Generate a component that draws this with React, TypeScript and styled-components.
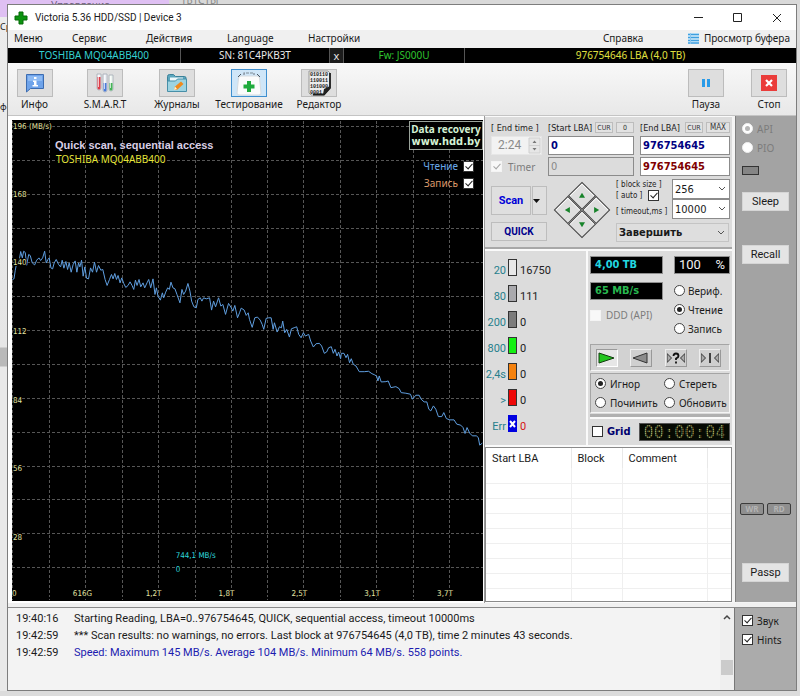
import React from 'react';
import styled, { createGlobalStyle, css } from 'styled-components';

const UI = '"Noto Sans", "Open Sans", sans-serif';
const NARROW = 'Roboto, "Noto Sans", sans-serif';
const WIDE = '"DejaVu Sans Condensed", "DejaVu Sans", "Noto Sans", sans-serif';

const GlobalStyle = createGlobalStyle`
  * { box-sizing: border-box; }
  body { margin: 0; background: #e2e2e2; color: #1a1a1a; font: 10px/14px ${UI}; }
  button, input, select { font: inherit; color: inherit; margin: 0; padding: 0; border-radius: 0; }
  svg { display: block; }
`;

/* ---------- desktop behind the window ---------- */

const Desktop = styled.div`
  display: grid;
  grid-template-columns: 7px minmax(0, 1fr) 3px;
  grid-template-rows: 4px auto 5px;
  min-height: 100vh;
  background: #dcdcdc;
`;

const TabStrip = styled.div`
  grid-column: 1 / -1;
  display: grid;
  grid-template-columns: 51px 118px 12px 1fr;
  overflow: hidden;
  background: linear-gradient(90deg, #dfc0f3 169px, #d9d9d9 169px);
  line-height: 10px;
  color: #6f6180;
`;

const TabTail = styled.span`
  grid-column: 4;
  margin-top: -5px;
  color: #8a8a8a;
`;

const LeftStrip = styled.div`
  display: flex;
  flex-direction: column;
  gap: 66px;
  overflow: hidden;
  padding-top: 16px;
  background: linear-gradient(#dfc0f3 13px, #ececec 13px, #e6e6e6 343px, #b9b9b9 344px, #b9b9b9 362px, #e9e9e9 363px);
  font-size: 9px;
`;

const Window = styled.main`
  display: flex;
  flex-direction: column;
  border: 1px solid #7d7d7d;
  background: #f0f0f0;
`;

/* ---------- title, menu, identity bar ---------- */

const TitleBar = styled.header`
  display: flex;
  align-items: center;
  height: 25px;
  padding: 0 13px 0 6px;
  background: #fff;
`;

const Title = styled.h1`
  flex: 1;
  margin: 0 0 0 7px;
  font: 10px/14px ${NARROW};
`;

const CaptionButton = styled.button`
  display: grid;
  place-items: center;
  width: 39px;
  height: 22px;
  border: 0;
  background: none;
  &:last-child { width: 12px; margin-left: 14px; }
`;

const MenuBar = styled.nav`
  display: grid;
  grid-template-columns: 58px 74px 81px 81px minmax(0, 1fr) 85px auto;
  align-items: center;
  height: 18px;
  padding: 0 6px 2px;
`;

const MenuItem = styled.button`
  display: flex;
  align-items: center;
  gap: 5px;
  border: 0;
  background: none;
  text-align: left;
  white-space: nowrap;
`;

const Identity = styled.div`
  display: grid;
  grid-template-columns: 172px 148px 13px 120px minmax(0, 1fr);
  gap: 1px;
  height: 15px;
  background: #555;
`;

const IdentityCell = styled.span<{ $color: string; $dim?: boolean }>`
  background: ${p => (p.$dim ? '#1c1c1c' : '#000')};
  color: ${p => p.$color};
  font-size: ${p => (p.$dim ? '11px' : '10px')};
  line-height: 15px;
  text-align: center;
  white-space: nowrap;
`;

/* ---------- toolbar ---------- */

const Toolbar = styled.div`
  display: grid;
  grid-template-columns: 53px 88px 56px 88px 52px minmax(0, 1fr) 56px 8px 54px;
  height: 53px;
  padding-top: 6px;
  border-bottom: 1px solid #c4c4c4;
  background: linear-gradient(#f8f8f8, #e8e8e8);
`;

const ToolSlot = styled.label<{ $col: number }>`
  grid-column: ${p => p.$col};
  display: flex;
  flex-direction: column;
  align-items: center;
  white-space: nowrap;
`;

const ToolButton = styled.button<{ $active?: boolean }>`
  display: grid;
  place-items: center;
  width: 36px;
  height: 28px;
  border: 1px solid ${p => (p.$active ? '#3f8fcf' : '#bcbcbc')};
  background: ${p => (p.$active ? '#cfe6f8' : '#dedede')};
`;

/* ---------- work area ---------- */

const WorkArea = styled.div`
  display: grid;
  grid-template-columns: minmax(0, 1fr) 248px 3px 61px;
  background: #f4f4f4;
`;

const ChartPane = styled.section`
  padding: 4px 1px 2px 4px;
  background: #fff;
`;

const ChartBox = styled.div`
  position: relative;
  height: 481px;
  overflow: hidden;
  background: #000;
`;

const ChartSvg = styled.svg`
  width: 100%;
  height: 100%;
`;

const Banner = styled.a`
  position: absolute;
  top: 1px;
  right: 0;
  width: 74px;
  height: 29px;
  border: 1px solid #9aa39a;
  background: #000;
  color: #d3f0d3;
  font: bold 10px/14px ${UI};
  text-align: center;
  text-decoration: none;
  white-space: nowrap;
`;

const BannerUrl = styled.span`
  display: block;
  font: bold 11px/12px ${WIDE};
`;

const Legend = styled.div`
  position: absolute;
  top: 39px;
  right: 9px;
  display: grid;
  gap: 3px;
`;

const LegendRow = styled.label<{ $color: string }>`
  display: flex;
  align-items: center;
  justify-content: flex-end;
  gap: 5px;
  color: ${p => p.$color};
`;

/* ---------- form controls ---------- */

const CheckInput = styled.input.attrs({ type: 'checkbox' })`
  appearance: none;
  display: grid;
  place-items: center;
  flex: none;
  width: 11px;
  height: 11px;
  border: 1px solid #333;
  background: #fff;
  &:disabled { border-color: #f4f4f4; background: #f8f8f8; }
  &:checked::after {
    content: '';
    width: 3px;
    height: 6px;
    margin-top: -2px;
    border: solid #222;
    border-width: 0 1px 1px 0;
    transform: rotate(42deg);
  }
  &:checked:disabled::after { border-color: #a5a5a5; }
`;

const RadioInput = styled.input.attrs({ type: 'radio' })`
  appearance: none;
  display: grid;
  place-items: center;
  flex: none;
  width: 11px;
  height: 11px;
  border: 1px solid #444;
  border-radius: 50%;
  background: #fff;
  &:checked::after {
    content: '';
    width: 5px;
    height: 5px;
    border-radius: 50%;
    background: #222;
  }
  &:disabled { border-color: #f0f0f0; }
  &:disabled:checked::after { background: #b5b5b5; }
`;

const Option = styled.label<{ $muted?: boolean; $gap?: number; $short?: boolean }>`
  display: flex;
  align-items: center;
  gap: ${p => p.$gap ?? 3}px;
  height: ${p => (p.$short ? 14 : 19)}px;
  color: ${p => (p.$muted ? '#7c7c7c' : 'inherit')};
  white-space: nowrap;
`;

const Field = styled.input<{ $tone?: string; $muted?: boolean }>`
  width: 100%;
  min-width: 0;
  height: 19px;
  padding: 0 2px;
  border: 1px solid #8b8b8b;
  background: ${p => (p.$muted ? '#dcdcdc' : '#fff')};
  color: ${p => p.$tone ?? '#888'};
  font: ${p => (p.$muted ? 'normal' : 'bold')} 11px/16px ${WIDE};
`;

const SmallLabel = styled.label`
  color: #222;
  font: 9px/12px ${WIDE};
  white-space: nowrap;
`;

const TinyButton = styled.button<{ $wide?: boolean }>`
  width: ${p => (p.$wide ? 24 : 18)}px;
  height: 11px;
  border: 1px solid #bdbdbd;
  background: #e2e2e2;
  color: #333;
  font: ${p => (p.$wide ? 8 : 7)}px/8px ${WIDE};
`;

const PushButton = styled.button<{ $bold?: boolean }>`
  border: 1px solid #bdbdbd;
  background: #dfdfdf;
  color: #00008c;
  font: bold 10px/14px ${NARROW};
`;

const SelectBox = styled.div`
  position: relative;
`;

const Select = styled.select<{ $strong?: boolean }>`
  appearance: none;
  display: block;
  width: 100%;
  height: ${p => (p.$strong ? 19 : 20)}px;
  padding: 0 2px;
  border: 1px solid ${p => (p.$strong ? '#c4c4c4' : '#8b8b8b')};
  background: ${p => (p.$strong ? '#dedede' : '#fff')};
  font: ${p => (p.$strong ? `bold 11px/17px ${WIDE}` : `11px/17px ${WIDE}`)};
`;

const SelectArrow = styled.svg`
  position: absolute;
  top: 7px;
  right: 4px;
  pointer-events: none;
`;

/* ---------- control column ---------- */

const Controls = styled.div`
  display: flex;
  flex-direction: column;
  border-left: 1px solid #9a9a9a;
  background: #fafafa;
`;

const ScanSetup = styled.section`
  display: flex;
  flex-direction: column;
  height: 130px;
  padding: 5px 2px 0 6px;
  margin-top: 1px;
  background: #dcdcdc;
`;

const RangeGrid = styled.div`
  display: grid;
  grid-template-columns: 51px 86px 90px;
  grid-template-rows: 11px 20px 19px;
  gap: 2px 6px;
  & > :nth-child(n + 4) { align-self: center; }
`;

const LabelRow = styled.div`
  display: flex;
  align-items: center;
  justify-content: space-between;
  height: 11px;
`;

const TinyGroup = styled.span`
  display: flex;
  gap: 3px;
`;

const TimeBox = styled.span`
  display: flex;
  align-items: center;
  height: 19px;
  border: 1px solid #e6e6e6;
  background: #f2f2f2;
`;

const TimeInput = styled.input`
  flex: 1;
  min-width: 0;
  padding-left: 6px;
  border: 0;
  background: none;
  color: #8a8a8a;
  font: 12px/15px ${NARROW};
`;

const SetupLower = styled.div`
  display: grid;
  grid-template-columns: 56px 69px 114px;
  flex: 1;
  margin-top: 3px;
`;

const ScanButtons = styled.div`
  display: grid;
  grid-template-columns: 40px 15px;
  grid-template-rows: 29px 19px;
  gap: 7px 1px;
  padding-top: 7px;
  & > :last-child { grid-column: 1 / -1; }
  & > :first-child { font-size: 11px; color: #0000d8; }
`;

const Pad = styled.div`
  display: grid;
  grid-template-columns: 20px 20px;
  grid-template-rows: 20px 20px;
  align-self: start;
  justify-self: center;
  width: 40px;
  margin-top: 11px;
  transform: rotate(45deg);
`;

const PadButton = styled.button<{ $turn: number }>`
  display: grid;
  place-items: center;
  border: 1px solid #444;
  background: #dedede;
  box-shadow: inset 1px 1px 0 #fff;
  & > svg { transform: rotate(${p => p.$turn}deg); }
`;

const ParamBlock = styled.div`
  display: grid;
  grid-template-columns: 56px 58px;
  grid-template-rows: 20px 20px 19px;
  align-content: start;
  & > :last-child { grid-column: 1 / -1; margin-top: 4px; margin-right: 1px; }
`;

const BlockLabels = styled.div`
  display: grid;
  grid-template-columns: auto auto;
  justify-content: start;
  align-content: start;
  column-gap: 4px;
  height: 20px;
  & > :first-child { grid-column: 1 / -1; }
`;

const ParamLabel = styled.label`
  color: #222;
  font: 8px/11px ${WIDE};
  white-space: nowrap;
`;

const TimeoutLabel = styled(ParamLabel)`
  align-self: center;
  padding-top: 4px;
`;

const Divider = styled.div`
  height: 4px;
  border-top: 2px solid #a8a8a8;
  background: #fafafa;
`;

const StatusArea = styled.section`
  display: grid;
  grid-template-columns: 101px minmax(0, 1fr);
  gap: 2px;
  height: 194px;
`;

const LatencyList = styled.div`
  padding-top: 4px;
  background: #dcdcdc;
`;

const LatencyRow = styled.div<{ $tone?: string }>`
  display: grid;
  grid-template-columns: 21px 9px auto;
  column-gap: 2px;
  align-items: start;
  height: 26px;
  padding-top: 4px;
  color: ${p => p.$tone ?? '#222'};
  font: 11px/12px ${NARROW};
`;

const Limit = styled.span`
  margin-top: 6px;
  color: #27808c;
  text-align: right;
  white-space: nowrap;
`;

const Count = styled.span`
  margin: 6px 0 0 1px;
`;

const Block = styled.span<{ $fill: string }>`
  display: grid;
  place-items: center;
  height: 17px;
  border: 1px solid ${p => (p.$fill === '#0000e0' ? '#0000e0' : '#333')};
  background: ${p => p.$fill};
`;

const StatusPanel = styled.div`
  display: flex;
  flex-direction: column;
  padding: 5px 2px 0 2px;
  background: #dcdcdc;
`;

const Readouts = styled.div`
  display: grid;
  grid-template-columns: 73px 56px;
  justify-content: space-between;
  height: 88px;
`;

const ReadoutStack = styled.div`
  display: flex;
  flex-direction: column;
`;

const Lcd = styled.output<{ $color: string; $plain?: boolean }>`
  display: flex;
  justify-content: space-between;
  height: 18px;
  margin-bottom: ${p => (p.$plain ? 7 : 8)}px;
  padding: 0 4px;
  border: 1px solid #8f8f8f;
  background: #000;
  color: ${p => p.$color};
  font: ${p => (p.$plain ? `13px/16px ${NARROW}` : `bold 11px/15px ${WIDE}`)};
`;

const Sunken = styled.div`
  border: 1px solid;
  border-color: #a5a5a5 #f5f5f5 #f5f5f5 #a5a5a5;
  background: #d2d2d2;
`;

const Transport = styled(Sunken)`
  display: flex;
  align-items: center;
  justify-content: space-between;
  height: 27px;
  padding: 0 8px 0 5px;
`;

const TransportButton = styled.button<{ $pressed?: boolean }>`
  display: grid;
  place-items: center;
  width: 22px;
  height: 18px;
  border: 1px solid;
  border-color: ${p => (p.$pressed ? '#999 #fff #fff #999' : '#eee #999 #999 #eee')};
  background: ${p => (p.$pressed ? '#e6e6e6' : '#cfcfcf')};
`;

const ActionGrid = styled(Sunken)`
  display: grid;
  grid-template-columns: 69px auto;
  justify-content: start;
  height: 40px;
  margin-top: 2px;
  padding-left: 4px;
`;

const Ridge = styled.div`
  height: 5px;
  margin-top: 1px;
  border-bottom: 2px solid #fafafa;
  background: #b0b0b0;
`;

const GridRow = styled.div`
  display: flex;
  align-items: center;
  justify-content: space-between;
  height: 25px;
  padding: 0 0 0 2px;
`;

const GridLabel = styled(Option)`
  color: #00006e;
  font: bold 11px/14px ${WIDE};
`;

const Clock = styled.time`
  position: relative;
  width: 91px;
  height: 18px;
  border: 1px solid #555;
  background: #060a03;
  color: #a2a660;
  font: 17px/17px "DejaVu Sans Mono", monospace;
  text-align: center;
  &::after {
    content: '';
    position: absolute;
    inset: 0;
    background:
      repeating-linear-gradient(90deg, rgba(6, 10, 3, 0.5) 0 1px, transparent 1px 2px),
      repeating-linear-gradient(rgba(6, 10, 3, 0.5) 0 1px, transparent 1px 2px);
  }
`;

const DefectPane = styled.div`
  height: 155px;
  margin-top: 2px;
  border: 1px solid #8a8a8a;
  background: #fff;
  overflow: hidden;
`;

const DefectTable = styled.table`
  width: 100%;
  table-layout: fixed;
  border-collapse: collapse;
  th { height: 20px; padding: 2px 0 0 6px; border-right: 1px solid #e8e8e8; font: 11px/14px ${NARROW}; text-align: left; }
  td { height: 15px; padding: 0; border-right: 1px solid #efefef; border-bottom: 1px solid #efefef; }
  th:last-child, td:last-child { border-right: 0; }
`;

const Col = styled.col<{ $width: number }>`
  width: ${p => p.$width}px;
`;

/* ---------- side column ---------- */

const Sidebar = styled.aside`
  display: flex;
  flex-direction: column;
  align-items: stretch;
  margin-bottom: 1px;
  padding: 3px 7px 0 6px;
  border-left: 1px solid #7f7f7f;
  background: #a3a3a3;
`;

const Lamp = styled.span`
  width: 17px;
  height: 9px;
  margin: 9px 0 17px;
  border: 1px solid #333;
  background: #858585;
`;

const SideButton = styled.button<{ $after?: number }>`
  height: 19px;
  margin-bottom: ${p => p.$after ?? 0}px;
  border: 1px solid #d5d5d5;
  background: #e4e4e4;
  font: 11px/15px ${NARROW};
`;

const Leds = styled.div`
  display: flex;
  justify-content: space-between;
  margin: auto -2px 48px;
`;

const Led = styled.span`
  width: 24px;
  height: 12px;
  border: 1px solid #3c3c3c;
  border-radius: 2px;
  background: #8f8f8f;
  color: #b4b4b4;
  font: bold 8px/10px ${UI};
  text-align: center;
`;

const SideSpacer = styled.div`
  height: 20px;
`;

/* ---------- log ---------- */

const Footer = styled.footer`
  display: grid;
  grid-template-columns: minmax(0, 1fr) 62px;
  height: 83px;
  margin-top: 4px;
  border-top: 1px solid #8a8a8a;
`;

const LogPane = styled.div`
  display: grid;
  grid-template-columns: minmax(0, 1fr) 14px;
  background: #f3f3f3;
`;

const LogLines = styled.ol`
  margin: 0;
  padding: 2px 0 0 8px;
  list-style: none;
`;

const LogLine = styled.li<{ $accent?: boolean }>`
  display: grid;
  grid-template-columns: 58px minmax(0, 1fr);
  color: #1a1a1a;
  font: 11px/17px ${NARROW};
  white-space: pre;
  ${p => p.$accent && css`& > span { color: #1c1cb0; }`}
`;

const ScrollTrack = styled.div`
  display: flex;
  flex-direction: column;
  align-items: center;
  justify-content: space-between;
  padding: 6px 0 15px;
  background: #efefef;
`;

const ScrollThumb = styled.span`
  width: 12px;
  height: 15px;
  background: #cbcbcb;
`;

const FooterSide = styled.div`
  padding: 3px 0 0 7px;
  border-left: 1px solid #777;
  background: #ababab;
`;

/* ---------- drawings ---------- */

const CrossIcon = () => (
  <svg width="14" height="14" viewBox="0 0 14 14">
    <path d="M5 1h4v4h4v4H9v4H5V9H1V5h4z" fill="#0b930f" stroke="#066a08" strokeWidth="1" />
  </svg>
);

const ListIcon = () => (
  <svg width="11" height="11" viewBox="0 0 11 11">
    <path d="M0 0h11v11H0z" fill="#d6ecfa" />
    <path d="M0 1.500h11M0 4.500h11M0 7.500h11M0 10h11" stroke="#3f9fdf" strokeWidth="1.400" />
    <path d="M2.500 0v11" stroke="#8cc6ee" />
  </svg>
);

const InfoIcon = () => (
  <svg width="20" height="20" viewBox="0 0 20 20">
    <path d="M1.500 1.500h17v14H5.500l-4 3.500z" fill="#6ea3ea" stroke="#3c6cb0" />
    <path d="M3 3h14v5H3z" fill="#8dbaf3" />
    <path d="M9 4h2.500v2H9zM8 7.500h3.500V12H13v1.500H7.500V12H9V9H8z" fill="#fff" />
  </svg>
);

const TubesIcon = () => (
  <svg width="22" height="22" viewBox="0 0 22 22">
    <g stroke="#a3abb5" strokeWidth=".8">
      <path d="M3 2h4v14a2 2 0 0 1-4 0z" fill="#f5f5f8" />
      <path d="M9 2h4v16a2 2 0 0 1-4 0z" fill="#eef0f5" />
      <path d="M15 3h4v14a2 2 0 0 1-4 0z" fill="#eef5f0" />
    </g>
    <path d="M3.500 5h3v11a1.500 1.500 0 0 1-3 0z" fill="#dd3c48" />
    <path d="M9.500 11h3v7a1.500 1.500 0 0 1-3 0z" fill="#4a7ad8" />
    <path d="M15.500 11h3v6a1.500 1.500 0 0 1-3 0z" fill="#46b458" />
    <path d="M4.500 3v12M10.500 3v14M16.500 4v12" stroke="#fff" opacity=".7" />
  </svg>
);

const FolderIcon = () => (
  <svg width="22" height="20" viewBox="0 0 22 20">
    <path d="M1.500 3.500q0-2 2-2h4l2 2h9q1.500 0 1.500 1.500v12.500h-18.500z" fill="#5ba6bd" stroke="#3b8199" />
    <path d="M4 4.500h13v6H4z" fill="#eef8fb" />
    <path d="M1.500 8h8l2-2h9v12.500h-19z" fill="#9dd3e1" stroke="#478fa8" />
    <path d="m8 17 1-3.500 6-5 2.500 2.500-6 5.500z" fill="#f08a1d" />
    <path d="m8 17 1-3.500 2 2.500z" fill="#fff2d2" />
  </svg>
);

const KitIcon = () => (
  <svg width="30" height="25" viewBox="0 0 30 25">
    <path d="M10 4V2h10v2" fill="none" stroke="#7f8994" strokeWidth="1.200" strokeDasharray="3 1" />
    <path d="M7 5h16q2 0 2.500 2l1.500 15q0 2-2 2H5q-2 0-2-2L4.500 7Q5 5 7 5z" fill="#fbfbfb" stroke="#d5dbe0" />
    <path d="m4 6 3-3M26 6l-3-3" stroke="#4a5560" />
    <path d="M13 10h4v3.500h3.500v4H17V21h-4v-3.500H9.500v-4H13z" fill="#20ab3d" />
  </svg>
);

const BinaryIcon = () => (
  <svg width="26" height="26" viewBox="0 0 26 26">
    <path d="M3 1h19l2 2v15l-6 7H5l-2-2z" fill="#ececec" stroke="#9a9a9a" />
    <path d="M24 3v15l-6 6.500H7" fill="none" stroke="#1c1c1c" strokeWidth="1.800" />
    <path d="M24 16v2l-6 6.500h-1l1-5.500z" fill="#222" />
    <g fontFamily="Liberation Mono, monospace" fontSize="5" fontWeight="bold" fill="#222">
      <text x="4" y="6">010110</text>
      <text x="4" y="12">110011</text>
      <text x="4" y="18">101000</text>
      <text x="4" y="24">0001</text>
    </g>
  </svg>
);

const PauseIcon = () => (
  <svg width="10" height="10" viewBox="0 0 10 10">
    <path d="M1 1h3v8H1zM6 1h3v8H6z" fill="#2a9be8" />
  </svg>
);

const StopIcon = () => (
  <svg width="16" height="16" viewBox="0 0 16 16">
    <path d="M0 0h16v16H0z" fill="#ea3c3a" />
    <path d="m5 5 6 6M11 5l-6 6" stroke="#fff" strokeWidth="2.200" />
  </svg>
);

const Triangle = ({ fill, size = 6 }: { fill: string; size?: number }) => (
  <svg width={size} height={size} viewBox="0 0 6 6">
    <path d="M0 5h6L3 0z" fill={fill} />
  </svg>
);

const DownCaret = () => (
  <svg width="7" height="4" viewBox="0 0 7 4">
    <path d="M0 0h7L3.500 4z" fill="#111" />
  </svg>
);

const Chevron = () => (
  <SelectArrow width="8" height="6" viewBox="0 0 8 6">
    <path d="m1 1 3 3 3-3" fill="none" stroke="#555" />
  </SelectArrow>
);

const transportDrawings = {
  play: <path d="M1 1v10l15-5z" fill="#22c51e" stroke="#123c10" />,
  back: <path d="M15 1v10L1 6z" fill="#8c8c8c" stroke="#333" />,
  seek: (
    <>
      <path d="M0 1.500v9L4.500 6zM18 1.500v9L13.500 6z" fill="#aaa" stroke="#333" />
      <path d="M6.500 4q0-2.500 2.500-2.500T11.500 4Q11.500 5.500 9 6.500V8M9 9.500v2" fill="none" stroke="#111" strokeWidth="1.800" />
    </>
  ),
  ends: (
    <>
      <path d="M0 1.500v9L4.500 6zM18 1.500v9L13.500 6z" fill="#aaa" stroke="#333" />
      <path d="M9 1v10" stroke="#111" strokeWidth="1.500" />
    </>
  ),
};

/* ---------- chart ---------- */

// Speed samples as x,y pairs, three units to a pixel, over the whole disk.
const SAMPLES =
  '37,490 42,488 46,462 50,440 56,443 62,406 67,425 71,405 76,409 80,447 86,415 91,418 97,440 104,446 110,432 117,425 122,433 128,425 134,405 139,440 144,430 148,425 153,455 158,458 163,440 169,430 176,445 182,452 187,432 192,456 198,436 203,460 208,440 214,468 220,445 226,434 231,468 236,440 240,452 245,432 250,480 255,452 260,486 266,488 272,455 278,468 284,438 290,468 296,448 303,462 309,460 316,490 322,508 329,490 335,475 340,488 345,472 350,490 355,478 361,500 366,485 372,502 378,514 385,508 391,497 397,508 402,520 407,492 412,508 418,490 423,512 430,500 435,515 442,500 447,490 453,515 460,488 466,535 470,515 475,540 482,552 488,530 492,545 498,528 504,515 509,520 514,498 520,515 526,518 532,535 541,560 547,520 552,535 558,525 565,502 571,525 576,555 583,572 590,575 595,550 602,545 607,555 612,545 620,548 630,545 636,582 642,555 648,572 657,545 664,570 670,565 678,595 687,562 695,575 700,585 706,568 714,605 720,590 725,576 734,582 740,598 746,590 750,610 758,634 766,605 774,603 782,612 788,625 793,640 800,607 808,605 815,605 821,640 825,620 833,648 840,632 846,635 850,615 856,650 862,640 870,663 876,638 884,635 892,632 898,655 905,665 912,650 918,660 928,655 934,675 942,693 950,683 960,682 967,690 975,712 982,708 988,695 996,692 1002,712 1007,700 1013,720 1018,708 1024,728 1026,712 1034,712 1040,725 1045,715 1051,740 1056,728 1062,745 1070,750 1080,767 1095,767 1108,766 1118,773 1125,776 1132,780 1136,795 1140,780 1146,798 1160,797 1167,795 1175,815 1190,812 1200,818 1206,830 1220,832 1234,835 1240,850 1250,838 1260,838 1266,850 1275,858 1283,858 1289,880 1295,885 1303,870 1310,880 1318,902 1328,902 1334,890 1342,908 1352,912 1365,912 1373,925 1385,928 1392,935 1398,953 1404,935 1412,952 1420,960 1432,960 1438,965 1442,988 1450,982';

const LINE = SAMPLES.split(' ')
  .map(pair => pair.split(',').map(Number))
  .map(([x, y]) => `${(x / 3 - 12).toFixed(1)},${(y / 3 - 4).toFixed(1)}`)
  .join(' ');

const COLUMNS = Array.from({ length: 13 }, (_, i) => Math.round(i * 36.5) + 0.5);
const ROWS = Array.from({ length: 14 }, (_, i) => Math.round(6 + i * 33.95) + 0.5);
const SPEEDS: [string, number][] = [['196 (MB/s)', 9], ['168', 77], ['140', 145], ['112', 214], ['84', 283], ['56', 351], ['28', 420]];
const SIZES: [string, number][] = [['0', 0], ['616G', 61], ['1,2T', 134], ['1,8T', 207], ['2,5T', 280], ['3,1T', 353], ['3,7T', 426]];

const SpeedChart = () => (
  <ChartSvg viewBox="0 0 472 481">
    <g stroke="#565656" strokeDasharray="3 2" shapeRendering="crispEdges">
      {COLUMNS.map(x => <path key={x} d={`M${x} 0V481`} />)}
      {ROWS.map(y => <path key={y} d={`M0 ${y}H472`} />)}
    </g>
    <polyline points={LINE} fill="none" stroke="#5f9fe0" strokeWidth="1" />
    <g fontFamily={WIDE} fontSize="8" fill="#e4e4a4" stroke="#000" strokeWidth="2" paintOrder="stroke">
      {SPEEDS.map(([text, y]) => <text key={text} x="1" y={y}>{text}</text>)}
      {SIZES.map(([text, x]) => <text key={text} x={x} y="477">{text}</text>)}
      <g fill="#2fd8dc">
        <text x="164" y="438">744,1 MB/s</text>
        <text x="164" y="452">0</text>
      </g>
    </g>
    <text x="43" y="29" fontFamily="Liberation Sans, sans-serif" fontSize="11" fontWeight="bold" fill="#d9cfe6">Quick scan, sequential access</text>
    <text x="44" y="43" fontFamily={UI} fontSize="10" fill="#e6e63c" stroke="#000" strokeWidth="2" paintOrder="stroke">TOSHIBA MQ04ABB400</text>
  </ChartSvg>
);

/* ---------- data ---------- */

const TOOLS: { label: string; icon: React.ReactNode; col: number; active?: boolean }[] = [
  { label: 'Инфо', icon: <InfoIcon />, col: 1 },
  { label: 'S.M.A.R.T', icon: <TubesIcon />, col: 2 },
  { label: 'Журналы', icon: <FolderIcon />, col: 3 },
  { label: 'Тестирование', icon: <KitIcon />, col: 4, active: true },
  { label: 'Редактор', icon: <BinaryIcon />, col: 5 },
  { label: 'Пауза', icon: <PauseIcon />, col: 7 },
  { label: 'Стоп', icon: <StopIcon />, col: 9 },
];

const LATENCIES = [
  { limit: '20', fill: '#e8e8e8', count: '16750' },
  { limit: '80', fill: '#a9a9ad', count: '111' },
  { limit: '200', fill: '#7c7c7c', count: '0' },
  { limit: '800', fill: '#14f014', count: '0' },
  { limit: '2,4s', fill: '#f5820f', count: '0' },
  { limit: '>', fill: '#ee0808', count: '0' },
  { limit: 'Err', fill: '#0000e0', count: '0', tone: '#d41414' },
];

const LOG = [
  { time: '19:40:16', text: 'Starting Reading, LBA=0..976754645, QUICK, sequential access, timeout 10000ms' },
  { time: '19:42:59', text: '*** Scan results: no warnings, no errors. Last block at 976754645 (4,0 TB), time 2 minutes 43 seconds.' },
  { time: '19:42:59', text: 'Speed: Maximum 145 MB/s. Average 104 MB/s. Minimum 64 MB/s. 558 points.', accent: true },
];

export default function App() {
  return (
    <>
      <GlobalStyle />
      <Desktop>
        <TabStrip><i /><span>Управление</span><i /><TabTail>ТБТСТЫ</TabTail></TabStrip>
        <LeftStrip><span>Ср</span><span>ф</span></LeftStrip>
        <Window>
          <TitleBar>
            <CrossIcon />
            <Title>Victoria 5.36 HDD/SSD | Device 3</Title>
            <CaptionButton aria-label="Minimize"><svg width="9" height="9"><path d="M0 4.500h9" stroke="#222" /></svg></CaptionButton>
            <CaptionButton aria-label="Maximize"><svg width="9" height="9"><path d="M.5.5h8v8h-8z" fill="none" stroke="#222" /></svg></CaptionButton>
            <CaptionButton aria-label="Close"><svg width="10" height="10"><path d="m1 1 8 8M9 1 1 9" stroke="#222" /></svg></CaptionButton>
          </TitleBar>
          <MenuBar>
            {['Меню', 'Сервис', 'Действия', 'Language', 'Настройки', 'Справка'].map(m => <MenuItem key={m}>{m}</MenuItem>)}
            <MenuItem><ListIcon />Просмотр буфера</MenuItem>
          </MenuBar>
          <Identity>
            <IdentityCell $color="#35d0d0">TOSHIBA MQ04ABB400</IdentityCell>
            <IdentityCell $color="#e8e8e8">SN: 81C4PKB3T</IdentityCell>
            <IdentityCell $color="#e8e8e8" $dim>x</IdentityCell>
            <IdentityCell $color="#2fc42f">Fw: JS000U</IdentityCell>
            <IdentityCell $color="#e0e040">976754646 LBA (4,0 TB)</IdentityCell>
          </Identity>
          <Toolbar>
            {TOOLS.map(t => (
              <ToolSlot key={t.label} $col={t.col}>
                <ToolButton $active={t.active}>{t.icon}</ToolButton>
                {t.label}
              </ToolSlot>
            ))}
          </Toolbar>

          <WorkArea>
            <ChartPane>
              <ChartBox>
                <SpeedChart />
                <Banner href="#recovery">Data recovery<BannerUrl>www.hdd.by</BannerUrl></Banner>
                <Legend>
                  <LegendRow $color="#6aa9ea">Чтение<CheckInput defaultChecked /></LegendRow>
                  <LegendRow $color="#dc9a6a">Запись<CheckInput defaultChecked /></LegendRow>
                </Legend>
              </ChartBox>
            </ChartPane>

            <Controls>
              <ScanSetup>
                <RangeGrid>
                  <SmallLabel htmlFor="end-time">[ End time ]</SmallLabel>
                  <LabelRow>
                    <SmallLabel htmlFor="start">[Start LBA]</SmallLabel>
                    <TinyGroup><TinyButton>CUR</TinyButton><TinyButton>0</TinyButton></TinyGroup>
                  </LabelRow>
                  <LabelRow>
                    <SmallLabel htmlFor="end">[End LBA]</SmallLabel>
                    <TinyGroup><TinyButton>CUR</TinyButton><TinyButton $wide>MAX</TinyButton></TinyGroup>
                  </LabelRow>
                  <TimeBox>
                    <TimeInput id="end-time" defaultValue="2:24" disabled />
                    <svg width="13" height="17" viewBox="0 0 13 17">
                      <path d="M1 1h11v15H1zM1 8.500h11" fill="#e6e6e6" stroke="#d0d0d0" />
                      <path d="M4.500 6h4l-2-2.500zM4.500 11h4l-2 2.500z" fill="#777" />
                    </svg>
                  </TimeBox>
                  <Field id="start" defaultValue="0" $tone="#000080" />
                  <Field id="end" defaultValue="976754645" $tone="#000080" />
                  <Option $muted $gap={6}><CheckInput defaultChecked disabled />Timer</Option>
                  <Field aria-label="Current start" defaultValue="0" $muted disabled />
                  <Field aria-label="Current end" defaultValue="976754645" $tone="#800000" />
                </RangeGrid>
                <SetupLower>
                  <ScanButtons>
                    <PushButton>Scan</PushButton>
                    <PushButton aria-label="Scan modes"><DownCaret /></PushButton>
                    <PushButton>QUICK</PushButton>
                  </ScanButtons>
                  <Pad>
                    <PadButton $turn={-45} aria-label="Up"><Triangle fill="#17832a" /></PadButton>
                    <PadButton $turn={45} aria-label="Right"><Triangle fill="#17832a" /></PadButton>
                    <PadButton $turn={-135} aria-label="Left"><Triangle fill="#17832a" /></PadButton>
                    <PadButton $turn={135} aria-label="Down"><Triangle fill="#17832a" /></PadButton>
                  </Pad>
                  <ParamBlock>
                    <BlockLabels>
                      <ParamLabel htmlFor="block">[ block size ]</ParamLabel>
                      <ParamLabel htmlFor="auto">[ auto ]</ParamLabel>
                      <CheckInput id="auto" defaultChecked />
                    </BlockLabels>
                    <SelectBox><Select id="block"><option>256</option></Select><Chevron /></SelectBox>
                    <TimeoutLabel htmlFor="timeout">[ timeout,ms ]</TimeoutLabel>
                    <SelectBox><Select id="timeout"><option>10000</option></Select><Chevron /></SelectBox>
                    <SelectBox><Select aria-label="After scan" $strong><option>Завершить</option></Select><Chevron /></SelectBox>
                  </ParamBlock>
                </SetupLower>
              </ScanSetup>
              <Divider />
              <StatusArea>
                <LatencyList>
                  {LATENCIES.map(l => (
                    <LatencyRow key={l.limit} $tone={l.tone}>
                      <Limit>{l.limit}</Limit>
                      <Block $fill={l.fill}>
                        {l.tone && <svg width="7" height="8"><path d="m1 1 5 6M6 1 1 7" stroke="#fff" strokeWidth="2" /></svg>}
                      </Block>
                      <Count>{l.count}</Count>
                    </LatencyRow>
                  ))}
                </LatencyList>
                <StatusPanel>
                  <Readouts>
                    <ReadoutStack>
                      <Lcd $color="#22d8e0">4,00 TB</Lcd>
                      <Lcd $color="#28b850">65 MB/s</Lcd>
                      <Option $muted $short $gap={5}><CheckInput disabled />DDD (API)</Option>
                    </ReadoutStack>
                    <ReadoutStack>
                      <Lcd $color="#f0f0f0" $plain><span>100</span><span>%</span></Lcd>
                      <Option><RadioInput name="mode" />Вериф.</Option>
                      <Option><RadioInput name="mode" defaultChecked />Чтение</Option>
                      <Option><RadioInput name="mode" />Запись</Option>
                    </ReadoutStack>
                  </Readouts>
                  <Transport>
                    {(['play', 'back', 'seek', 'ends'] as const).map(k => (
                      <TransportButton key={k} $pressed={k === 'play'} aria-label={k}>
                        <svg width="18" height="12" viewBox="0 0 18 12">{transportDrawings[k]}</svg>
                      </TransportButton>
                    ))}
                  </Transport>
                  <ActionGrid>
                    <Option $gap={4}><RadioInput name="action" defaultChecked />Игнор</Option>
                    <Option $gap={4}><RadioInput name="action" />Стереть</Option>
                    <Option $gap={4}><RadioInput name="action" />Починить</Option>
                    <Option $gap={4}><RadioInput name="action" />Обновить</Option>
                  </ActionGrid>
                  <Ridge />
                  <GridRow>
                    <GridLabel $gap={4}><CheckInput />Grid</GridLabel>
                    <Clock>00:00:04</Clock>
                  </GridRow>
                </StatusPanel>
              </StatusArea>
              <DefectPane>
                <DefectTable>
                  <colgroup><Col $width={85} /><Col $width={51} /><Col $width={85} /><col /></colgroup>
                  <thead><tr><th>Start LBA</th><th>Block</th><th>Comment</th><th /></tr></thead>
                  <tbody>
                    {Array.from({ length: 9 }, (_, i) => <tr key={i}><td /><td /><td /><td /></tr>)}
                  </tbody>
                </DefectTable>
              </DefectPane>
            </Controls>
            <i />
            <Sidebar>
              <Option $muted $gap={4}><RadioInput name="bus" defaultChecked disabled />API</Option>
              <Option $muted $gap={4}><RadioInput name="bus" disabled />PIO</Option>
              <Lamp />
              <SideButton $after={34}>Sleep</SideButton>
              <SideButton>Recall</SideButton>
              <Leds><Led>WR</Led><Led>RD</Led></Leds>
              <SideButton>Passp</SideButton>
              <SideSpacer />
            </Sidebar>
          </WorkArea>

          <Footer>
            <LogPane>
              <LogLines>
                {LOG.map(l => (
                  <LogLine key={l.text} $accent={l.accent}><time>{l.time}</time><span>{l.text}</span></LogLine>
                ))}
              </LogLines>
              <ScrollTrack>
                <svg width="8" height="6" viewBox="0 0 8 6"><path d="m1 5 3-3 3 3" fill="none" stroke="#444" strokeWidth="1.500" /></svg>
                <ScrollThumb />
              </ScrollTrack>
            </LogPane>
            <FooterSide>
              <Option $gap={4}><CheckInput defaultChecked />Звук</Option>
              <Option $gap={4}><CheckInput defaultChecked />Hints</Option>
            </FooterSide>
          </Footer>
        </Window>
      </Desktop>
    </>
  );
}
